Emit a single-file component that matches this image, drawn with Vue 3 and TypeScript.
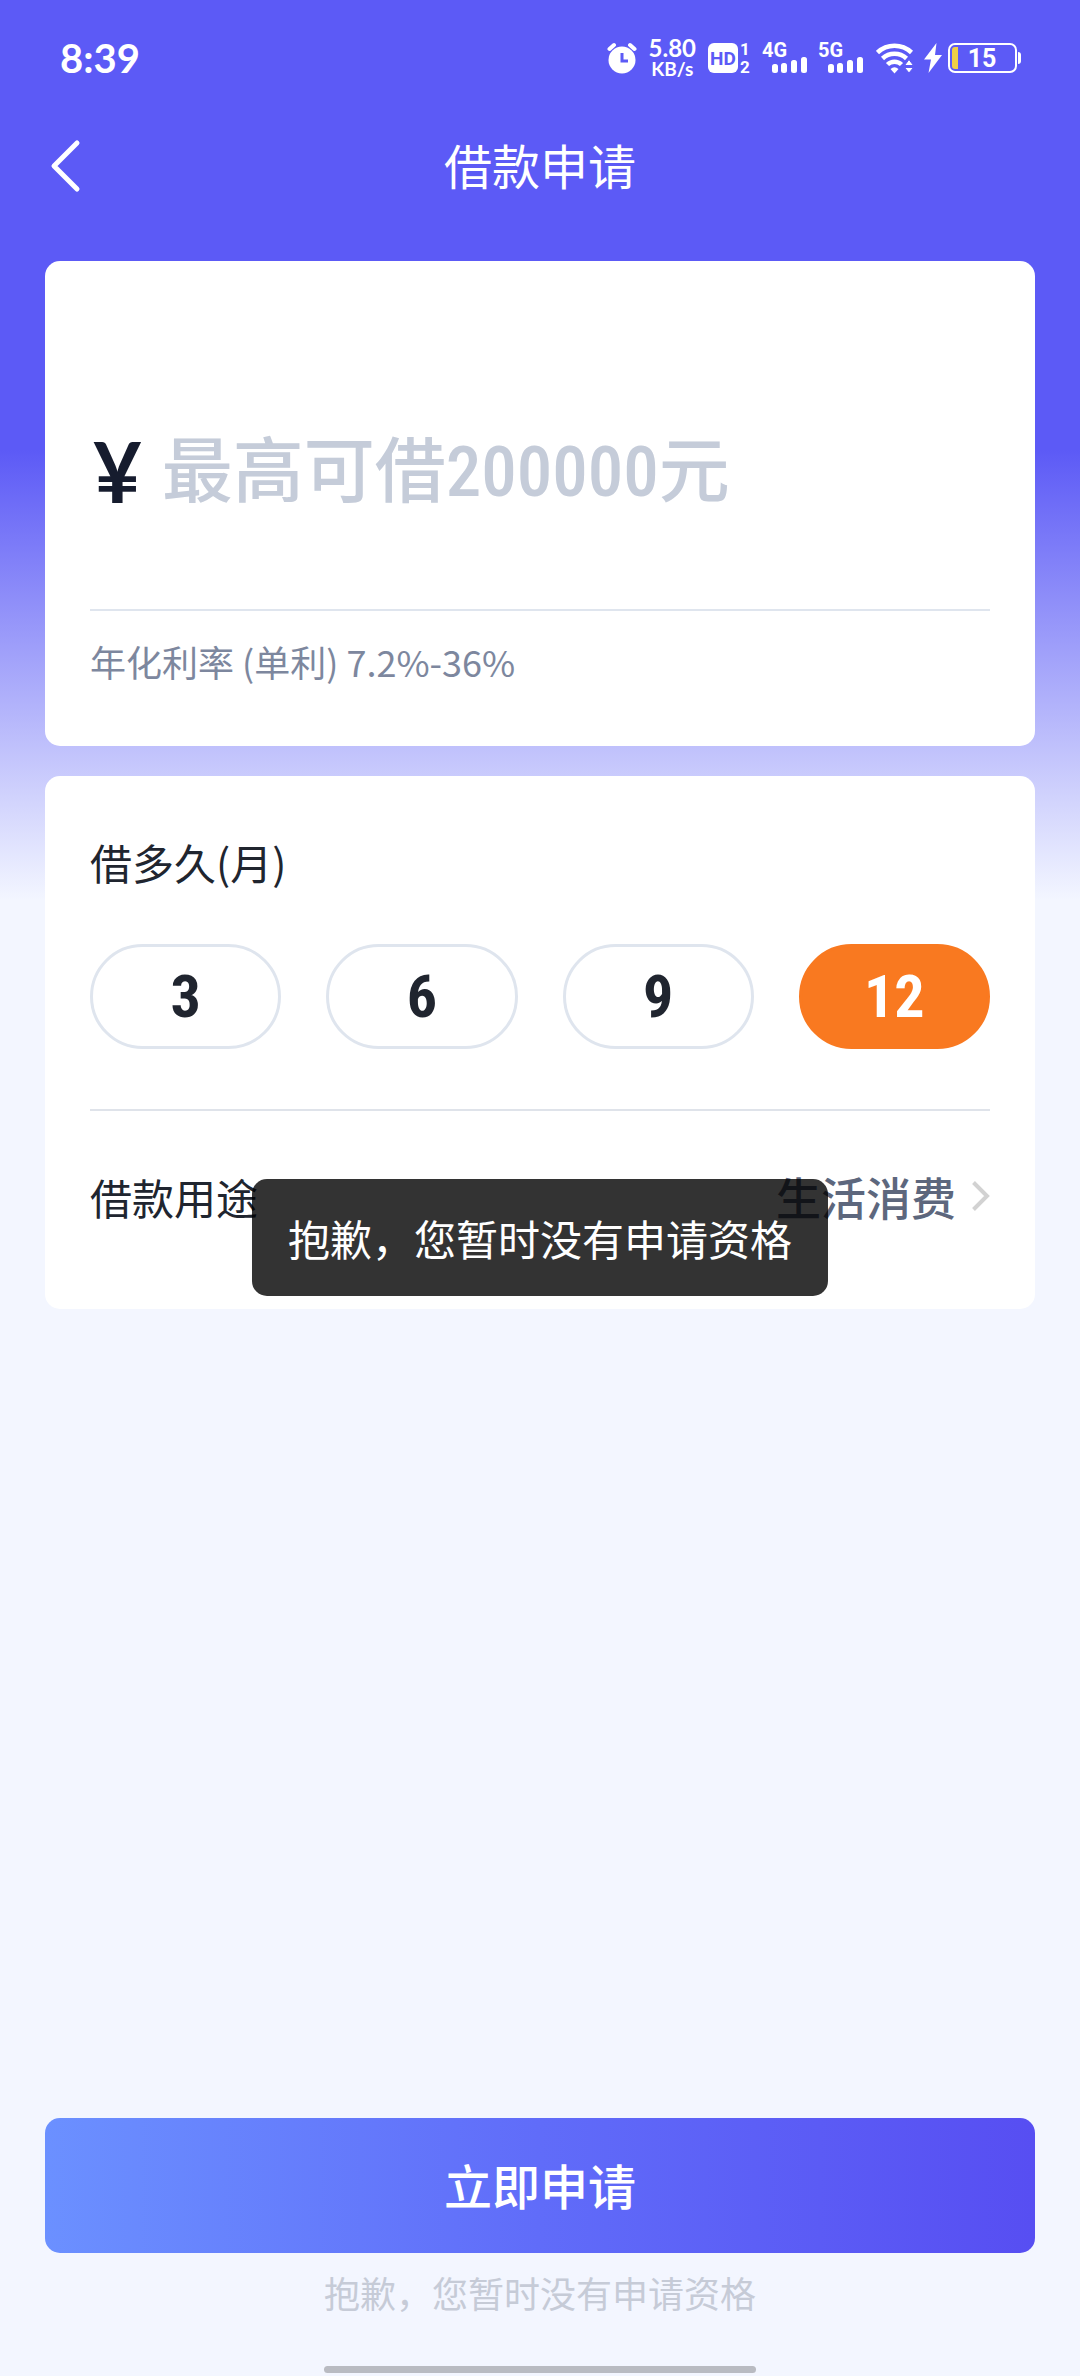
<script setup lang="ts">
import { ref } from 'vue'

const amount = ref<string>('')
const terms: number[] = [3, 6, 9, 12]
const term = ref<number>(12)
const purpose = ref<string>('生活消费')
const notice = '抱歉，您暂时没有申请资格'
const signals: string[] = ['4G', '5G']
</script>

<template>
  <div class="page">
    <div class="status">
      <span class="time">8:39</span>
      <div class="indicators">
        <svg class="alarm" width="30" height="32" viewBox="0 0 30 32" aria-hidden="true">
          <circle cx="15" cy="18" r="13.5" fill="#fff" />
          <path d="M2.500 7 7 3M27.500 7 23 3" stroke="#fff" stroke-width="4" stroke-linecap="round" />
          <path d="M15 11v8h6" fill="none" stroke="#5c5af6" stroke-width="3" />
        </svg>
        <span class="speed"><b>5.80</b><b class="unit">KB/s</b></span>
        <svg class="hd" width="44" height="44" viewBox="0 -6 44 44" aria-hidden="true">
          <rect x="0" y="1" width="30" height="30" rx="6" fill="#fff" />
          <text x="15" y="23" text-anchor="middle" font-size="19" fill="#5c5af6">HD</text>
          <text x="37" y="13" text-anchor="middle" font-size="17" fill="#fff">1</text>
          <text x="37" y="31" text-anchor="middle" font-size="17" fill="#fff">2</text>
        </svg>
        <svg
          v-for="name in signals"
          :key="name"
          class="signal"
          width="46"
          height="44"
          viewBox="0 -6 46 44"
          aria-hidden="true"
        >
          <text x="0" y="15" font-size="20" fill="#fff">{{ name }}</text>
          <g fill="#fff">
            <rect x="10" y="22" width="6" height="9" rx="2.5" />
            <rect x="19" y="21" width="6" height="10" rx="2.5" />
            <rect x="29" y="18" width="6" height="13" rx="2.5" />
            <rect x="39" y="15" width="6" height="16" rx="2.5" />
          </g>
        </svg>
        <svg class="wifi" width="38" height="32" viewBox="0 0 38 32" aria-hidden="true">
          <g fill="none" stroke="#fff" stroke-width="4.5">
            <path d="M1.500 10.500a25 25 0 0 1 34 0" />
            <path d="M6.500 16.500a17.500 17.500 0 0 1 24 0" />
            <path d="M11.500 22.500a10 10 0 0 1 14 0" />
          </g>
          <path d="M14.500 27q4-3.500 8 0l-4 4.500z" fill="#fff" />
          <path d="m33 17.500 4.500 6h-9zM33 31l-4.500-5.500h9z" fill="#fff" stroke="#5c5af6" stroke-width="1" />
        </svg>
        <svg class="bolt" width="18" height="32" viewBox="0 0 18 32" aria-hidden="true">
          <path d="M12.500 1 0 17.500h7L4.500 31 18 13h-7z" fill="#fff" />
        </svg>
        <svg class="battery" width="74" height="32" viewBox="0 0 74 32" aria-hidden="true">
          <rect x="1" y="2" width="67" height="28" rx="6" fill="none" stroke="#fff" stroke-width="2" />
          <path d="M70 10q3 0 3 3v6q0 3-3 3z" fill="#fff" />
          <path d="M10 5H7Q4 5 4 8v16q0 3 3 3h3z" fill="#efcf45" />
          <text x="34" y="25" text-anchor="middle" font-size="25" fill="#fff">15</text>
        </svg>
      </div>
    </div>

    <header class="nav">
      <button class="back" type="button" aria-label="返回">
        <svg width="36" height="54" viewBox="0 0 36 54" fill="none" stroke="#fff" stroke-width="5" stroke-linecap="round" stroke-linejoin="round">
          <path d="M29 4 6 27 29 50" />
        </svg>
      </button>
      <h1>借款申请</h1>
    </header>

    <main class="content">
      <section class="card">
        <label class="amount">
          <span class="currency">¥</span>
          <input v-model="amount" type="text" inputmode="numeric" aria-label="借款金额" placeholder="最高可借200000元" />
        </label>
        <p class="rate">年化利率 (单利) 7.2%-36%</p>
      </section>

      <section class="card">
        <fieldset class="terms">
          <legend>借多久(月)</legend>
          <div class="options">
            <label v-for="n in terms" :key="n" class="option" :class="{ active: term === n }">
              <input v-model="term" type="radio" name="term" :value="n" />
              <span>{{ n }}</span>
            </label>
          </div>
        </fieldset>
        <button class="purpose" type="button">
          <span>借款用途</span>
          <span class="value">{{ purpose }}</span>
          <svg width="18" height="30" viewBox="0 0 18 30" fill="none" stroke="#d2d2d2" stroke-width="4" aria-hidden="true">
            <path d="m1.500 1.500 13.500 13.500-13.500 13.500" />
          </svg>
        </button>
      </section>
    </main>

    <footer class="footer">
      <button class="submit" type="button">立即申请</button>
      <p>{{ notice }}</p>
      <div class="home-bar"></div>
    </footer>

    <div class="toast" role="alert">{{ notice }}</div>
  </div>
</template>

<style>
body {
  margin: 0;
}
</style>

<style scoped>
.page {
  position: relative;
  display: flex;
  flex-direction: column;
  box-sizing: border-box;
  min-height: 100vh;
  background: #f3f6ff linear-gradient(#5c5af6 450px, #f3f6ff 900px) no-repeat;
  color: #20252f;
  font-family: "Noto Sans CJK SC", sans-serif;
}
button,
input {
  margin: 0;
  padding: 0;
  border: 0;
  background: none;
  color: inherit;
  font: inherit;
}
h1,
p {
  margin: 0;
}
svg {
  display: block;
  flex: none;
}
.status {
  display: flex;
  align-items: center;
  justify-content: space-between;
  height: 116px;
  padding: 0 58px 0 60px;
  color: #fff;
  font-family: Lato, sans-serif;
}
.time {
  font-size: 40px;
  font-weight: 700;
}
.indicators {
  display: flex;
  align-items: center;
}
.indicators text {
  font-family: Roboto, sans-serif;
  font-weight: 700;
}
.speed {
  display: flex;
  flex-direction: column;
  align-items: center;
  margin: 0 12px;
  font-size: 24px;
  line-height: 21px;
}
.unit {
  font-size: 19px;
}
.hd {
  margin-right: 10px;
}
.signal {
  margin-right: 10px;
}
.wifi {
  margin: 0 10px 0 2px;
}
.bolt {
  margin-right: 6px;
}
.nav {
  display: flex;
  align-items: center;
  justify-content: center;
  position: relative;
  height: 100px;
  color: #fff;
}
.nav h1 {
  padding-bottom: 5px;
  font-size: 48px;
  font-weight: 400;
  line-height: 72px;
}
.back {
  position: absolute;
  left: 48px;
}
.content {
  display: flex;
  flex-direction: column;
  gap: 30px;
  padding: 45px 45px 0;
}
.card {
  padding: 0 45px;
  border-radius: 15px;
  background: #fff;
}
.amount {
  display: flex;
  align-items: center;
  gap: 20px;
  box-sizing: border-box;
  height: 350px;
  padding: 120px 0 48px 3px;
  border-bottom: 2px solid #dfe5ee;
}
.currency {
  color: #161c2e;
  font-family: Lato, sans-serif;
  font-size: 84px;
  font-weight: 700;
  line-height: 108px;
}
.amount input {
  flex: 1;
  min-width: 0;
  height: 108px;
  outline: 0;
  font-family: "Roboto Condensed", "Noto Sans CJK SC", sans-serif;
  font-size: 71px;
  font-weight: 500;
}
.amount input::placeholder {
  color: #c5ccd9;
  opacity: 1;
}
.rate {
  padding: 23px 0 58px;
  color: #7d879e;
  font-size: 36px;
  line-height: 54px;
}
.terms {
  margin: 0;
  padding: 56px 0 60px;
  border: 0;
  border-bottom: 2px solid #dfe3ea;
}
.terms legend {
  float: left;
  width: 100%;
  margin-bottom: 52px;
  padding: 0;
  font-size: 42px;
  line-height: 60px;
}
.options {
  clear: both;
  display: grid;
  grid-template-columns: repeat(4, 1fr);
  gap: 45px;
}
.option {
  position: relative;
  display: flex;
  align-items: center;
  justify-content: center;
  box-sizing: border-box;
  height: 105px;
  border: 3px solid #dfe5ee;
  border-radius: 53px;
  font-family: "Roboto Condensed", Roboto, sans-serif;
  font-size: 60px;
  font-weight: 700;
}
.option input {
  position: absolute;
  inset: 0;
  opacity: 0;
}
.option.active {
  border-color: #f97920;
  background: #f97920;
  color: #fff;
}
.purpose {
  display: flex;
  align-items: center;
  width: 100%;
  height: 170px;
  margin-bottom: 28px;
  font-size: 42px;
}
.value {
  margin: 0 16px 0 auto;
  color: #5d677d;
  font-size: 45px;
  font-weight: 500;
}
.footer {
  display: flex;
  flex-direction: column;
  align-items: center;
  margin-top: auto;
  padding: 45px 45px 3px;
}
.submit {
  width: 100%;
  height: 135px;
  padding-bottom: 3px;
  border-radius: 15px;
  background: linear-gradient(90deg, #6b90ff, #606cf9 50%, #574ef2);
  color: #fff;
  font-size: 48px;
  font-weight: 500;
}
.footer p {
  margin: 12px 0 47px;
  color: #c6cbd7;
  font-size: 36px;
  line-height: 54px;
}
.home-bar {
  width: 40vw;
  height: 7px;
  border-radius: 4px;
  background: #b9bbc2;
}
.toast {
  position: absolute;
  top: calc(50% - 9px);
  left: 50%;
  transform: translateX(-50%);
  padding: 27px 36px;
  border-radius: 15px;
  background: rgba(0, 0, 0, 0.8);
  color: #fff;
  font-size: 42px;
  line-height: 63px;
  white-space: nowrap;
}
</style>
